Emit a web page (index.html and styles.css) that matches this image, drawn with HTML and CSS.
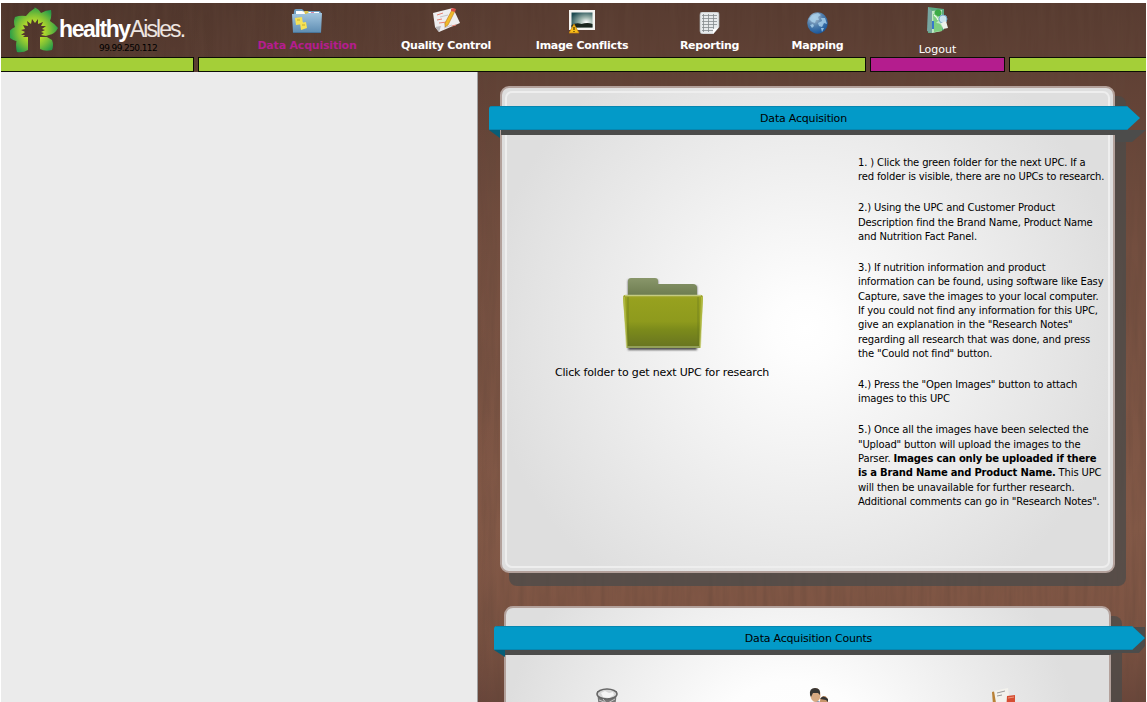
FILE: index.html
```
<!DOCTYPE html>
<html lang="en">
<head>
<meta charset="utf-8">
<title>healthyAisles - Data Acquisition</title>
<link rel="stylesheet" href="styles.css">
</head>
<body>
<div class="app">
  <svg class="wood" width="1145" height="699" aria-hidden="true">
    <defs>
      <linearGradient id="woodBase" x1="0" y1="0" x2="0" y2="1">
        <stop offset="0" stop-color="#573b30"/><stop offset=".1" stop-color="#604135"/>
        <stop offset=".35" stop-color="#734e3f"/><stop offset=".75" stop-color="#835947"/><stop offset=".9" stop-color="#7d5443"/><stop offset="1" stop-color="#69463a"/>
      </linearGradient>
      <linearGradient id="woodSide"><stop offset="0" stop-color="#000" stop-opacity=".12"/><stop offset=".45" stop-color="#000" stop-opacity="0"/></linearGradient>
      <filter id="grain" x="0" y="0" width="100%" height="100%">
        <feTurbulence type="fractalNoise" baseFrequency=".16 .012" numOctaves="3" seed="4"/>
        <feColorMatrix values="0 0 0 0 .12  0 0 0 0 .06  0 0 0 0 .04  .65 0 0 0 -.22"/>
      </filter>
    </defs>
    <rect width="1145" height="699" fill="url(#woodBase)"/>
    <rect width="1145" height="699" fill="url(#woodSide)"/>
    <rect width="1145" height="699" filter="url(#grain)"/>
  </svg>

  <header class="header">
    <div class="brand">
      <svg class="brand-mark" width="48" height="46" viewBox="0 0 48 46">
        <defs><radialGradient id="leaf" gradientUnits="userSpaceOnUse" cx="24" cy="24" r="25"><stop offset=".4" stop-color="#b2d92c"/><stop offset=".65" stop-color="#7fc136"/><stop offset="1" stop-color="#269b48"/></radialGradient></defs>
        <path fill="url(#leaf)" d="M24 0q5 2 7 6 5-3 10-3 1 6-1 11 5 3 8 7-3 6-9 7l-3 1-5-1 3-2-3-1 4-2-3-1 4-3-5 0 2-4-5 2 0-5-3 4-3-4-1 5-4-3 1 5-5-1 2 4-4 1 4 2-4 3 4 0-2 2 2 1-1 1q-3 2-8 2-6-2-9-6 3-6 8-8-2-5 0-10 5-2 11-1 4-5 9-8z"/>
        <path fill="url(#leaf)" d="M7 32l4-2 7 0v13q-5 3-11 2-2-7 0-13zM30 30h7l5 3q2 5 0 10-7 2-12-1z"/>
      </svg>
      <span class="brand-name"><b>healthy</b><span class="brand-light">Aisles.</span></span>
      <span class="brand-ip">99.99.250.112</span>
    </div>
    <nav class="nav">
      <a class="nav-item nav-active item-data">
        <svg width="30" height="26" viewBox="0 0 30 26"><defs><linearGradient id="blueF" x2="0" y2="1"><stop stop-color="#a3c6df"/><stop offset="1" stop-color="#5d8cb2"/></linearGradient></defs>
          <path d="M2 3q0-2 2-2h6l2 2h15q2 0 2 3v8H1z" fill="#6f9fc3"/><path d="M4 3h6l3 1h14v4H4z" fill="#fff"/><path d="M12 3l4 0 1 3h-4z" fill="#d9c451"/><path d="M19 4h3v3h-3z" fill="#d98ba9"/><path d="M0 6h14l2-1h14l-1 20H1z" fill="url(#blueF)"/><path d="M1 24.500h28" stroke="#4a7599"/><path d="M3 10l7-1 1 7-7 1zM8 15l6-1 1 6-6 2z" fill="#f5e257"/><path d="M5 12h3M10 17h3" stroke="#c4a928"/></svg>
        <span>Data Acquisition</span></a>
      <a class="nav-item item-quality">
        <svg width="27" height="26" viewBox="0 0 27 26"><path d="M0 5l20-5 7 15-21 9-4-5z" fill="#eeeeef"/><path d="M2 19l6-1-2 6z" fill="#b9b9bd"/><path d="M4 7l6-2M4 12l5-1M6 15l8-1M19 18l4-1" stroke="#e78275"/><path d="M7 9l8-2M11 16l5-2M11 20l8-3" stroke="#c5c5cb" fill="none"/><path d="M19 2l3 1-7 14-3 2 0-4z" fill="#f0bb29" stroke="#b8791c" stroke-width=".6"/><path d="M18 1l2-1 3 1-1 3-4-1z" fill="#d85148"/></svg>
        <span>Quality Control</span></a>
      <a class="nav-item item-images">
        <svg width="26" height="24" viewBox="0 0 26 24"><defs><radialGradient id="sky" cx=".7" cy=".65" r=".8"><stop stop-color="#fff"/><stop offset=".4" stop-color="#9db5ad"/><stop offset="1" stop-color="#1d4b51"/></radialGradient></defs><path d="M0 0h26v20H0z" fill="#f4f4f1"/><path d="M2.500 2.500h21v15h-21z" fill="url(#sky)"/><path d="M2.500 15q5-3 10-1 6-2 11 0v3.500h-21z" fill="#1b261f"/><path d="M5 14l5 9H0z" fill="#f9be18" stroke="#cc820b" stroke-width=".7"/><path d="M5 17v3M5 21v1" stroke="#4a3700" stroke-width="1.200"/></svg>
        <span>Image Conflicts</span></a>
      <a class="nav-item item-reporting">
        <svg width="21" height="22" viewBox="0 0 21 22"><path d="M3 0h15q2 0 2 2v13l-6 7H4q-3 0-3-3V3q0-3 2-3z" fill="#e7eaec" stroke="#a9acad" stroke-width=".7"/><path d="M3 3.500h15M3 6.500h15M3 9.500h15M3 12.500h15M3 15.500h12M3 18.500h11M4.500 2v18M9.500 2v18M14.500 2v15" stroke="#858b8e" stroke-width=".8"/><path d="M14 22v-5q3 0 6-2z" fill="#fff"/></svg>
        <span>Reporting</span></a>
      <a class="nav-item item-mapping">
        <svg width="21" height="22" viewBox="0 0 21 22"><defs><radialGradient id="globe" cx=".35" cy=".25" r=".8"><stop stop-color="#b7c5d0"/><stop offset=".5" stop-color="#507eac"/><stop offset="1" stop-color="#14539a"/></radialGradient></defs><ellipse cx="10.500" cy="11" rx="10.300" ry="10.700" fill="url(#globe)"/><path d="M2 7l3-4 6-2 3 2-3 2 1 3-3 0-1 3-3-1zM3 13l3-1 1 2-2 2zM11 11l4-2-1-3 4 0 2 6-3-1-2 4-3-1zM14 16l3 0-2 4z" fill="#a9d2ed" opacity=".8"/></svg>
        <span>Mapping</span></a>
      <a class="nav-item nav-plain item-logout">
        <svg width="21" height="27" viewBox="0 0 21 27"><path d="M1 0l16 2v21L5 26H1z" fill="#5da982"/><path d="M1 0l4 4v22l-5-2z" fill="#77a5a0"/><path d="M5 4l10-1v21L5 26z" fill="#c0e8c5"/><circle cx="11" cy="6" r="3.500" fill="#3aaa46"/><path d="M6 7q5 0 6 6l-3 3q5 0 6 4v4l-8 1z" fill="#7dce80"/><path d="M7 8q3 2 4 5" stroke="#e8f8e8" stroke-width="1.500" fill="none"/><path d="M5 14h2v8H5z" fill="#3878ca"/><circle cx="16" cy="12" r="4" fill="#c9e3ed" stroke="#75a9c9"/><path d="M14 16l5-2 2 7-5 1z" fill="#eef1ec"/></svg>
        <span>Logout</span></a>
    </nav>
  </header>
  <div class="stripe"><i></i><i></i><i class="pink"></i><i class="last"></i></div>

  <div class="body">
    <aside class="side"></aside>
    <main class="main">
      <section class="card card-main">
        <div class="card-shadow"></div>
        <div class="card-face"><div class="card-rim"></div></div>
        <h2 class="ribbon">
          <svg width="660" height="40"><path d="M12 24v5h614v7h17l14-12z" fill="#4c4c4b"/><path d="M0 24h11v8z" fill="#065e78"/><path d="M3 0H638l13 12-13 12H0V3q0-3 3-3z" fill="#039ac8"/><path d="M2 .5H638M0 23.500h638" stroke="#087ea5" stroke-opacity=".7"/></svg>
          <span>Data Acquisition</span></h2>
        <div class="content">
          <div class="pick">
            <svg width="84" height="80" viewBox="0 0 84 80">
              <defs><linearGradient id="fBack" x2="0" y2="1"><stop stop-color="#89966a"/><stop offset="1" stop-color="#667549"/></linearGradient>
              <linearGradient id="fFront" x2="0" y2="1"><stop stop-color="#a2a52b"/><stop offset=".08" stop-color="#97a11f"/><stop offset=".5" stop-color="#8e9a1d"/><stop offset=".65" stop-color="#7c8b1b"/><stop offset="1" stop-color="#677321"/></linearGradient>
              <filter id="soft"><feGaussianBlur stdDeviation="1.300"/></filter></defs>
              <path d="M6 5h30v6h39v64H6z" fill="#333" opacity=".85" filter="url(#soft)"/>
              <path d="M6 24V6q0-3 3-3h24q3 0 3 3v3h35q4 0 4 4v12z" fill="url(#fBack)"/>
              <path d="M3 20h76q2 0 2 3l-3 50H5L1 23q0-3 2-3z" fill="url(#fFront)"/>
              <path d="M2 22l3 50h73l2-50" fill="none" stroke="#bdc451" stroke-width="2" opacity=".65"/>
              <path d="M6 22v49M76 22v49" stroke="#66761e" opacity=".6"/>
              <path d="M3 20.500h76" stroke="#c4cb82" stroke-width="1.500"/><path d="M5 72h73" stroke="#8f9e62" stroke-width="1.500"/>
            </svg>
            <p>Click folder to get next UPC for research</p>
          </div>
          <div class="steps">
            <p><span>1. ) Click the green folder for the next UPC. If a</span><span>red folder is visible, there are no UPCs to research.</span></p>
            <p><span>2.) Using the UPC and Customer Product</span><span>Description find the Brand Name, Product Name</span><span>and Nutrition Fact Panel.</span></p>
            <p><span>3.) If nutrition information and product</span><span>information can be found, using software like Easy</span><span>Capture, save the images to your local computer.</span><span>If you could not find any information for this UPC,</span><span>give an explanation in the "Research Notes"</span><span>regarding all research that was done, and press</span><span>the "Could not find" button.</span></p>
            <p><span>4.) Press the "Open Images" button to attach</span><span>images to this UPC</span></p>
            <p><span>5.) Once all the images have been selected the</span><span>"Upload" button will upload the images to the</span><span>Parser. <b>Images can only be uploaded if there</b></span><span><b>is a Brand Name and Product Name.</b> This UPC</span><span>will then be unavailable for further research.</span><span>Additional comments can go in "Research Notes".</span></p>
          </div>
        </div>
      </section>
      <section class="card card-counts">
        <div class="card-shadow"></div>
        <div class="card-face"></div>
        <h2 class="ribbon">
          <svg width="652" height="40"><path d="M11 24v5h605l4-2h25l6-7V1h-12z" fill="#4c4c4b"/><path d="M0 24h11v7z" fill="#065e78"/><path d="M3 0H638l13 12-13 12H0V3q0-3 3-3z" fill="#039ac8"/><path d="M2 .5H638M0 23.500h638" stroke="#087ea5" stroke-opacity=".7"/></svg>
          <span>Data Acquisition Counts</span></h2>
        <div class="count-icons">
          <svg width="22" height="30" viewBox="0 0 22 30"><path d="M1 3l3 27h14l3-27z" fill="#777"/><ellipse cx="11" cy="6" rx="10" ry="5" fill="#d6d6d6" stroke="#666" stroke-width="1.500"/><path d="M5 5l4-2 4 2 4-1 1 3-5 3-6-1z" fill="#f5f5f5"/><path d="M3 12l15 6M19 11L5 19M7 11l8 10" stroke="#c8c8c8"/></svg>
          <svg width="24" height="30" viewBox="0 0 24 30"><path d="M0 30q0-16 8-17 8 0 8 17z" fill="#6c8eae"/><ellipse cx="6.500" cy="7" rx="5" ry="7" fill="#d8aa82"/><path d="M1 7q-1-7 5-7 6 0 5 7l-2-2H4L2 9z" fill="#393633"/><ellipse cx="15" cy="13" rx="4" ry="5" fill="#c69469"/><path d="M11 11q3-5 8 0v3l-2-2z" fill="#333"/></svg>
          <svg width="25" height="30" viewBox="0 0 25 30"><path d="M0 4l4-1 2 14H1z" fill="#b98136"/><path d="M2 3L16 0l2 15H4z" fill="#f3f2ed"/><path d="M5 5l8-2M5 8l5-1" stroke="#999"/><path d="M15 8l8-1v18h-9z" fill="#d64d32"/><path d="M16 10l6-1" stroke="#ef9a80"/></svg>
        </div>
      </section>
    </main>
  </div>
</div>
</body>
</html>
```
FILE: styles.css
```
* { box-sizing: border-box; }
body { margin: 0; height: 702px; overflow: hidden; background: #fff; font-family: Verdana, "DejaVu Sans", sans-serif; color: #000; }
svg { display: block; flex: none; }
p, h2 { margin: 0; font-weight: normal; }
.app { position: relative; margin: 3px 1px 0; height: 699px; overflow: hidden; display: flex; flex-direction: column; }
.wood { position: absolute; inset: 0; z-index: -1; }

.header { height: 54px; flex: none; display: flex; }
.brand { position: relative; width: 200px; padding: 4px 0 0 9px; display: flex; }
.brand-name { font: 23px/30px "Liberation Sans", Arial, sans-serif; color: #fff; white-space: nowrap; margin: 7px 0 0 1px; }
.brand-name b { display: inline-block; letter-spacing: -1.400px; }
.brand-light { color: #eee5e0; letter-spacing: -1.900px; }
.brand-ip { position: absolute; left: 98px; top: 39px; font-size: 9px; line-height: 12px; letter-spacing: -.6px; }
.nav { position: relative; display: flex; }
.nav-item { display: flex; flex-direction: column; align-items: center; justify-content: flex-end; height: 50px; color: #fff; font-size: 11px; line-height: 14px; font-weight: bold; white-space: nowrap; gap: 5px; }
.nav-item span { letter-spacing: -.26px; }
.nav-active { color: #b41d8e; }
.item-data { width: 212px; }
.item-data span { letter-spacing: -.2px; }
.item-quality { width: 66px; }
.item-images { width: 206px; }
.item-reporting { width: 49px; }
.item-mapping { width: 167px; }
.item-logout { width: 73px; height: 54px; gap: 9px; }
.nav-plain { font-weight: normal; }
.item-logout span { letter-spacing: 0; }

.stripe { display: grid; grid-template-columns: 193px 668px 135px 138px; gap: 4px; height: 15px; flex: none; }
.stripe i { background: #a4cf38; border: 1px solid #0b0d05; }
.stripe i:first-child { border-left: 0; }
.stripe .pink { background: #b41d8e; }
.stripe .last { border-right: 0; }

.body { display: flex; flex: 1; min-height: 0; }
.side { width: 477px; flex: none; background: #ebebeb; border-right: 1px solid #a1a1a1; }
.main { flex: 1; padding: 14px 0 0 22px; }
.card { position: relative; }
.card-main { width: 615px; height: 487px; }
.card-counts { width: 607px; height: 200px; margin: 33px 0 0 4px; }
.card-shadow { position: absolute; left: 9px; top: 10px; right: -11px; bottom: -13px; background: rgba(75, 75, 74, .75); border-radius: 8px; }
.card-face { position: absolute; inset: 0; border: 2px solid #b3a19b; border-radius: 9px; padding: 3px; background: radial-gradient(circle 320px at 303px 240px, #fff 0, #fdfdfd 10%, #dedede 100%); }
.card-rim { height: 100%; border: 2px solid #eeeeee; border-radius: 7px; }
.card-counts .card-face { background: radial-gradient(circle 290px at 285px 160px, #fff 0, #fdfdfd 30%, #dedede 100%); }
.ribbon { position: absolute; left: -11px; top: 20px; width: 652px; height: 24px; }
.card-counts .ribbon { left: -10px; }
.ribbon svg { position: absolute; left: 0; top: 0; }
.ribbon span { position: absolute; inset: 0; padding-right: 23px; text-align: center; font-size: 11px; line-height: 26px; letter-spacing: -.2px; }
.content { position: relative; display: flex; padding-top: 70px; }
.pick { width: 358px; padding-top: 119px; display: flex; flex-direction: column; align-items: center; }
.pick svg { margin-right: 30px; }
.pick p { margin: 11px 34px 0 0; font-size: 11px; line-height: 14px; letter-spacing: -.17px; white-space: nowrap; }
.steps { display: flex; flex-direction: column; gap: 16.400px; font-size: 10px; line-height: 14.400px; letter-spacing: -.15px; }
.steps b { letter-spacing: -.2px; }
.steps span { display: block; white-space: nowrap; }
.count-icons { position: absolute; left: 92px; top: 82px; display: flex; gap: 191px; }
.count-icons svg:last-child { margin-left: -32px; }
```
